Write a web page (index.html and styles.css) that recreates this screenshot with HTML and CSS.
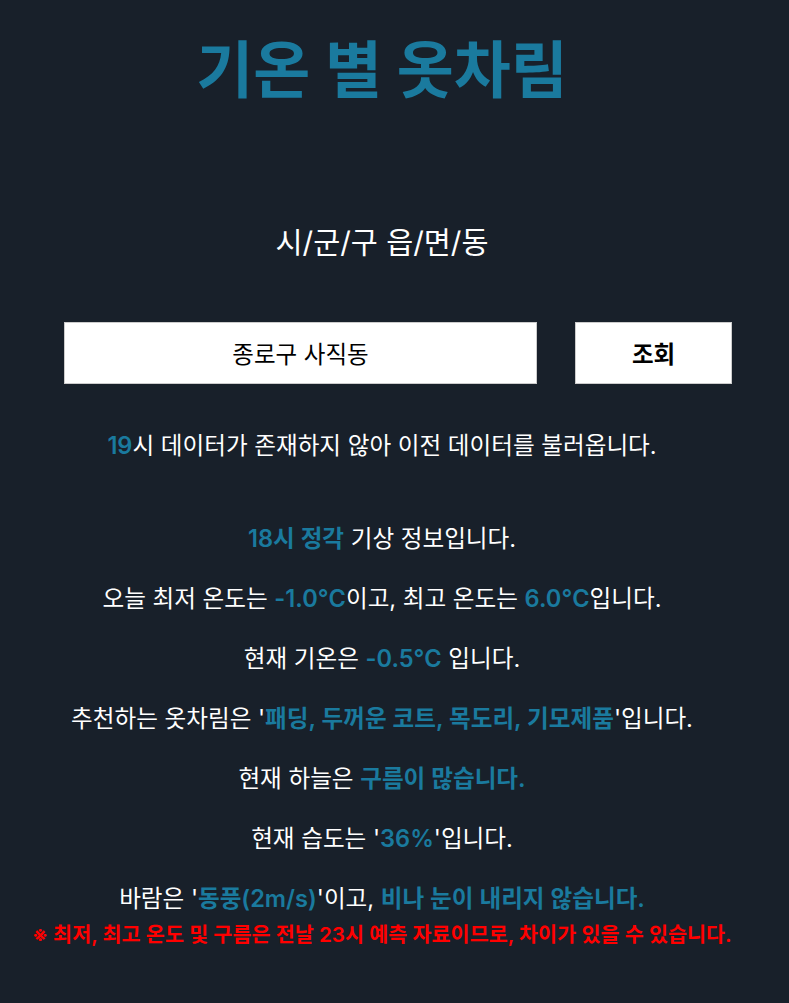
FILE: index.html
```html
<!DOCTYPE html>
<html lang="ko">
<head>
<meta charset="utf-8">
<title>기온 별 옷차림</title>
<link rel="stylesheet" href="styles.css">
</head>
<body>
<main class="app">
  <h1 class="title">기온 별 옷차림</h1>
  <h2 class="region-label">시/군/구 읍/면/동</h2>
  <form class="search">
    <input class="search-input" type="text" value="종로구 사직동">
    <button class="search-btn" type="button">조회</button>
  </form>
  <p class="notice"><span class="hl">19</span>시 데이터가 존재하지 않아 이전 데이터를 불러옵니다.</p>
  <section class="info">
    <p class="line"><span class="hl">18시 정각</span> 기상 정보입니다.</p>
    <p class="line">오늘 최저 온도는 <span class="hl">-1.0°C</span>이고, 최고 온도는 <span class="hl">6.0°C</span>입니다.</p>
    <p class="line">현재 기온은 <span class="hl">-0.5°C</span> 입니다.</p>
    <p class="line">추천하는 옷차림은 '<span class="hl">패딩, 두꺼운 코트, 목도리, 기모제품</span>'입니다.</p>
    <p class="line">현재 하늘은 <span class="hl">구름이 많습니다.</span></p>
    <p class="line">현재 습도는 '<span class="hl">36%</span>'입니다.</p>
    <p class="line">바람은 '<span class="hl">동풍(2m/s)</span>'이고, <span class="hl">비나 눈이 내리지 않습니다.</span></p>
  </section>
  <p class="warn">※ 최저, 최고 온도 및 구름은 전날 23시 예측 자료이므로, 차이가 있을 수 있습니다.</p>
</main>
</body>
</html>
```

FILE: styles.css
```css
html, body {
  margin: 0;
  padding: 0;
  background: #18202a;
}
body {
  font-family: Inter, "Noto Sans CJK KR", sans-serif;
  color: #ffffff;
}
.app {
  width: 764px;
  display: flex;
  flex-direction: column;
  align-items: stretch;
  text-align: center;
}
.title {
  margin: 26px 0 0;
  font-size: 62px;
  line-height: 90px;
  font-weight: 700;
  color: #1a7a9e;
}
.region-label {
  margin: 110px 0 0;
  font-size: 29.4px;
  line-height: 34px;
  font-weight: 400;
}
.search {
  margin: 62px 0 0;
  padding: 0 32px 0 64px;
  display: flex;
  gap: 38px;
}
.search-input {
  flex: 1;
  min-width: 0;
  height: 62px;
  box-sizing: border-box;
  border: 1px solid #cccccc;
  background: #ffffff;
  font-family: Inter, "Noto Sans CJK KR", sans-serif;
  font-size: 23.5px;
  text-align: center;
  color: #000000;
  padding: 0;
}
.search-btn {
  width: 157px;
  height: 62px;
  box-sizing: border-box;
  border: 1px solid #cccccc;
  background: #ffffff;
  font-family: Inter, "Noto Sans CJK KR", sans-serif;
  font-size: 23.5px;
  font-weight: 700;
  color: #000000;
  padding: 0;
}
.notice {
  margin: 47px 0 0;
  font-size: 23.6px;
  line-height: 30px;
}
.info {
  margin-top: 63px;
  display: flex;
  flex-direction: column;
  gap: 30px;
}
.line {
  margin: 0;
  font-size: 23.6px;
  line-height: 30px;
}
.hl {
  color: #1a7a9e;
  font-weight: 600;
}
.warn {
  margin: 8px 0 0;
  font-size: 20.7px;
  line-height: 26px;
  font-weight: 600;
  color: #ff0000;
}
```
